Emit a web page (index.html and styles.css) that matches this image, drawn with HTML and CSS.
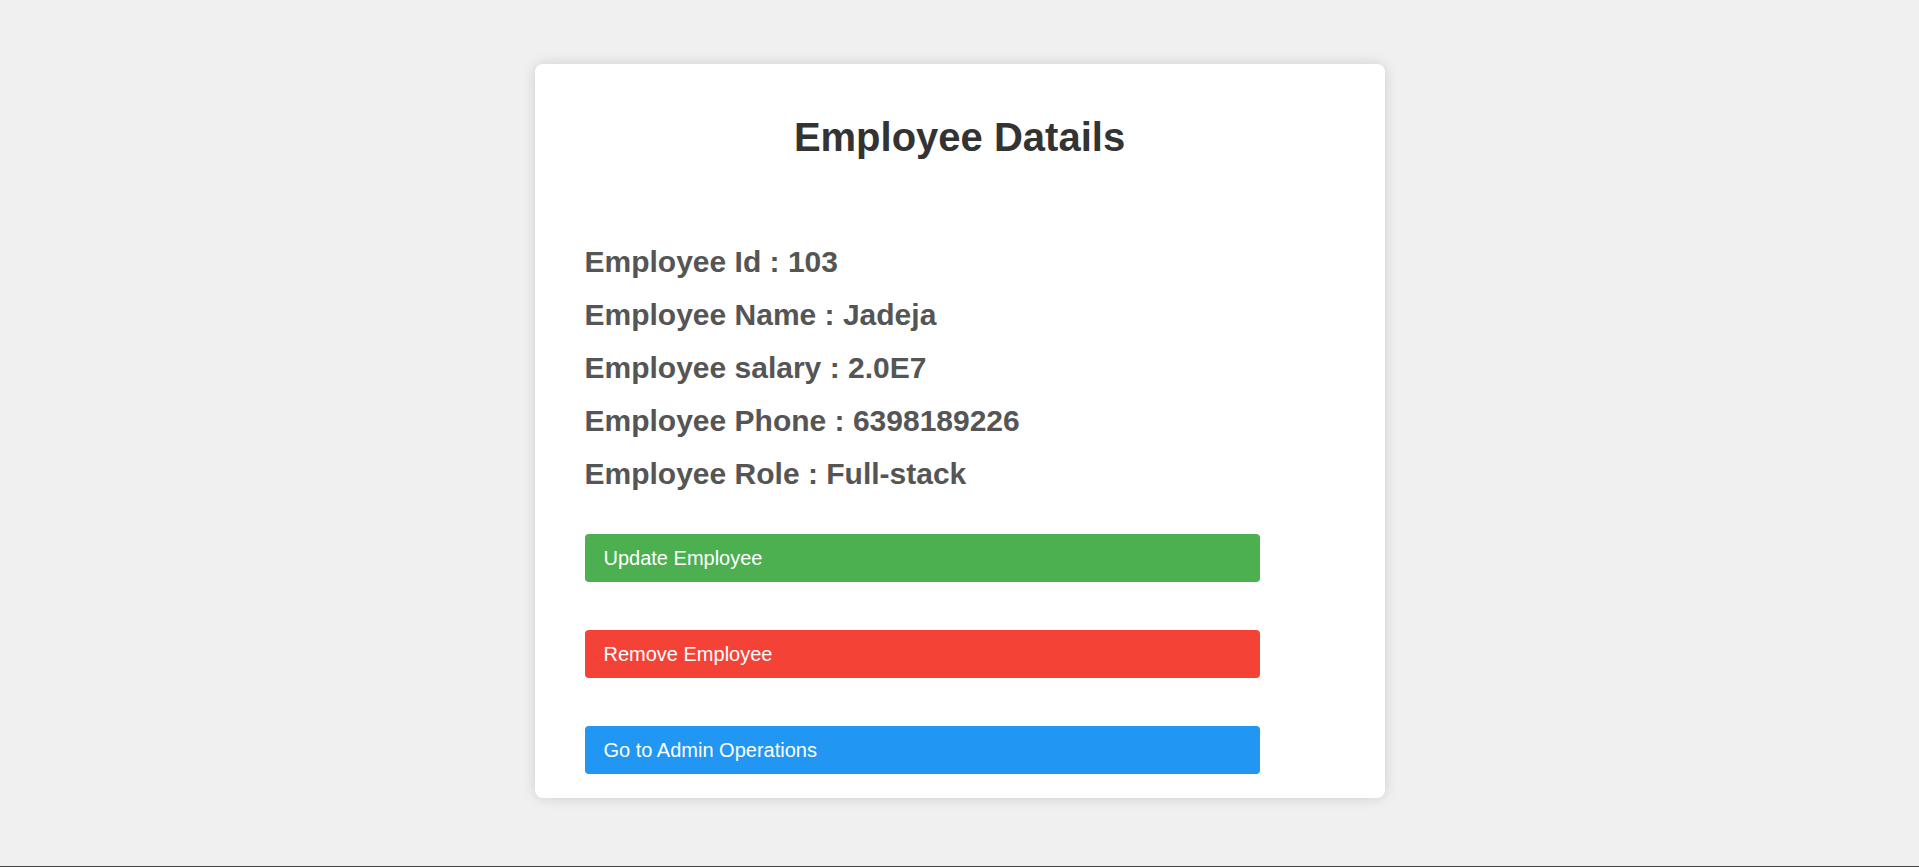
FILE: index.html
```html
<!DOCTYPE html>
<html lang="en">
<head>
<meta charset="utf-8">
<title>Employee Datails</title>
<link rel="stylesheet" href="styles.css">
</head>
<body>
<div class="page">
  <div class="card">
    <h1 class="title">Employee Datails</h1>
    <div class="details">
      <p class="detail">Employee Id : 103</p>
      <p class="detail">Employee Name : Jadeja</p>
      <p class="detail">Employee salary : 2.0E7</p>
      <p class="detail">Employee Phone : 6398189226</p>
      <p class="detail">Employee Role : Full-stack</p>
    </div>
    <div class="actions">
      <button class="btn btn-update">Update Employee</button>
      <button class="btn btn-remove">Remove Employee</button>
      <button class="btn btn-admin">Go to Admin Operations</button>
    </div>
  </div>
</div>
</body>
</html>
```

FILE: styles.css
```css
html, body {
  margin: 0;
  padding: 0;
}

body {
  background: #f0f0f0;
  font-family: "Liberation Sans", Arial, sans-serif;
  overflow: hidden;
}

.page {
  box-sizing: border-box;
  height: 100vh;
  border-bottom: 1px solid #444;
  padding-top: 64px;
  display: flex;
  flex-direction: column;
  align-items: center;
}

.card {
  box-sizing: border-box;
  width: 850px;
  height: 734px;
  background: #fff;
  border-radius: 8px;
  box-shadow: 0 0 14px rgba(0, 0, 0, 0.14);
  padding: 50px 50px 24px;
}

.title {
  margin: 0;
  text-align: center;
  font-size: 40px;
  line-height: 46px;
  font-weight: bold;
  color: #333;
}

.details {
  margin-top: 84px;
  display: flex;
  flex-direction: column;
  gap: 18px;
}

.detail {
  margin: 0;
  font-size: 30px;
  line-height: 35px;
  font-weight: bold;
  color: #555;
}

.actions {
  margin-top: 43px;
  display: flex;
  flex-direction: column;
  gap: 48px;
}

.btn {
  box-sizing: border-box;
  width: 90%;
  height: 48px;
  padding: 0 19px;
  border: none;
  border-radius: 4px;
  color: #fff;
  font-family: "Liberation Sans", Arial, sans-serif;
  font-size: 20px;
  line-height: 23px;
  text-align: left;
  cursor: pointer;
}

.btn-update {
  background: #4caf50;
}

.btn-remove {
  background: #f44336;
}

.btn-admin {
  background: #2196f3;
}
```
